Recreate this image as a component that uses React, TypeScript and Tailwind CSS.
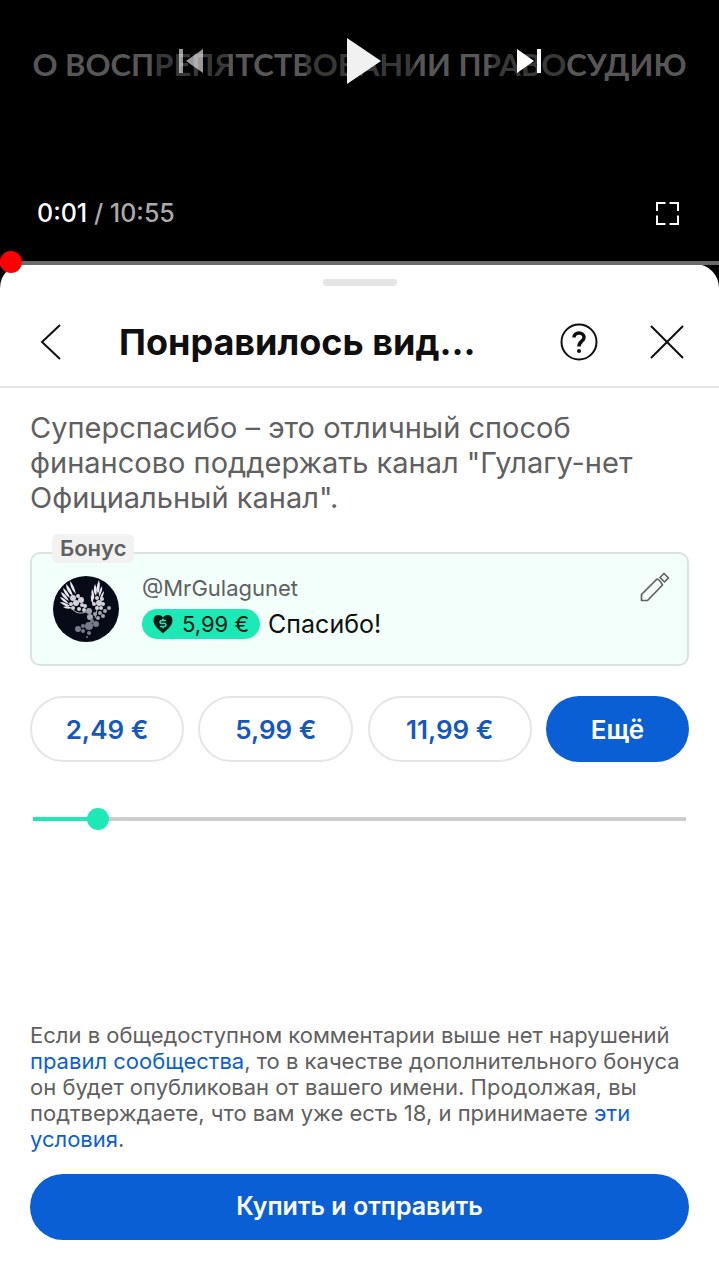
import { useState } from "react"

const prices = [
    { label: "2,49 €", value: 2.49, width: "w-[154px]" },
    { label: "5,99 €", value: 5.99, width: "w-[155px]" },
    { label: "11,99 €", value: 11.99, width: "w-[164px]" },
]

const MAX_PRICE = 70

function DoveAvatar() {
    return (
        <svg viewBox="0 0 66 66" className="size-[66px] shrink-0" role="img" aria-label="MrGulagunet">
            <circle cx="33" cy="33" r="33" fill="#070b18" />
            {/* Feathers */}
            <g fill="#e8e9ec">
                <path d="M17 5Q21 9 23 18Q17 13 17 5ZM13 8Q18 12 20 20Q13 16 13 8ZM10 12Q15 15 17 22Q11 19 10 12ZM8 16Q13 18 16 25Q9 22 8 16ZM7 21Q12 22 16 28Q9 26 7 21ZM7 26Q12 26 17 30Q11 31 7 26ZM10 31Q15 29 19 32Q14 34 10 31Z" />
                <path d="M46 4Q48 11 45 18Q42 12 46 4ZM42 8Q45 14 43 20Q39 15 42 8ZM39 13Q42 18 41 24Q37 20 39 13ZM49 10Q50 15 46 21Q45 16 49 10ZM51 15Q51 20 47 24Q47 19 51 15ZM38 19Q41 23 40 28Q37 24 38 19Z" />
            </g>
            {/* Flowers of the wings */}
            <g fill="#d2d3d7">
                <circle cx="20" cy="22" r="3" />
                <circle cx="25" cy="20" r="2" />
                <circle cx="18" cy="28" r="2" />
                <circle cx="23" cy="27" r="3" />
                <circle cx="28" cy="24" r="3" />
                <circle cx="29" cy="29" r="2" />
                <circle cx="20" cy="32" r="2" />
                <circle cx="26" cy="33" r="2" />
                <circle cx="32" cy="30" r="2" />
                <circle cx="31" cy="34" r="2" />
                <circle cx="44" cy="22" r="2" />
                <circle cx="49" cy="23" r="2" />
                <circle cx="46" cy="27" r="3" />
                <circle cx="41" cy="28" r="2" />
                <circle cx="50" cy="28" r="2" />
                <circle cx="44" cy="32" r="2" />
                <circle cx="48" cy="32" r="2" />
            </g>
            <path d="M20 34Q26 39 33 36M35 32L38 40M44 34L42 42" fill="none" stroke="#b5b7be" strokeWidth="1" />
            {/* Body and tail */}
            <g fill="#a1a4ae">
                <circle cx="36" cy="35" r="3" />
                <circle cx="37" cy="41" r="3" />
                <circle cx="42" cy="38" r="2" />
                <circle cx="47" cy="37" r="2" />
                <circle cx="52" cy="35" r="2" />
                <circle cx="56" cy="32" r="2" />
                <circle cx="50" cy="40" r="2" />
                <circle cx="45" cy="42" r="2" />
            </g>
            <g fill="#777b89">
                <circle cx="43" cy="48" r="3" />
                <circle cx="39" cy="45" r="2" />
                <circle cx="36" cy="50" r="4" />
                <circle cx="30" cy="50" r="2" />
                <circle cx="25" cy="53" r="3" />
                <circle cx="30" cy="55" r="2" />
                <circle cx="36" cy="57" r="2" />
                <circle cx="34" cy="61" r="1" />
            </g>
        </svg>
    )
}

function HeartIcon() {
    return (
        <svg viewBox="0 0 20 20" className="size-5" aria-hidden="true">
            <path d="M10 19.500C7 16.500 0.500 12 0.500 6.500C0.500 3 2.500 1 5.500 1C7.500 1 9 2 10 3.500C11 2 12.500 1 14.500 1C17.500 1 19.500 3 19.500 6.500C19.500 12 13 16.500 10 19.500Z" fill="#031a13" />
            <path d="M13 6.500H8.500Q7 6.500 7 8T8.500 9.500H11.500Q13 9.500 13 11T11.500 12.500H7M10 4.500V6.500M10 12.500V14.500" fill="none" stroke="#1de9b6" strokeWidth="1.500" />
        </svg>
    )
}

function PencilIcon() {
    return (
        <svg viewBox="0 0 30 30" className="size-[30px]" fill="none" stroke="#5c6362" strokeWidth="1.700" strokeLinejoin="round" aria-hidden="true">
            <path d="M1.500 28.500V22.500L17 7Q19.500 7.500 22.500 13L7.500 28.500ZM20 5.500L24 1.500L28.500 6L24.500 10Z" />
        </svg>
    )
}

export default function App() {
    const [price, setPrice] = useState(5.99)
    const percent = (price / MAX_PRICE) * 100

    return (
        <div className="flex min-h-screen flex-col bg-black font-['Inter',sans-serif]">
            {/* Video player */}
            <section className="relative flex h-[264px] flex-col">
                <p className="mt-[44px] whitespace-nowrap text-center font-['Lato',sans-serif] text-[31px] leading-10 font-bold text-[#575757]">
                    О ВОСПРЕПЯТСТВОВАНИИ ПРАВОСУДИЮ
                </p>
                <div className="absolute inset-x-0 top-[6px] flex items-center justify-center gap-[76px]">
                    <button type="button" aria-label="Предыдущее" className="flex size-[76px] items-center justify-center rounded-full bg-black/35 text-white/60">
                        <svg viewBox="0 0 24 24" className="size-6" fill="currentColor"><path d="M0 0h4v24H0zM24 0v24L7 12z" /></svg>
                    </button>
                    <button type="button" aria-label="Смотреть" className="flex size-[110px] items-center justify-center rounded-full bg-black/35 pl-[9px] text-[#f1f1f1]">
                        <svg viewBox="0 0 34 46" className="h-[46px] w-[34px]" fill="currentColor"><path d="M0 0L34 23L0 46Z" /></svg>
                    </button>
                    <button type="button" aria-label="Следующее" className="flex size-[76px] items-center justify-center rounded-full bg-black/35 text-white">
                        <svg viewBox="0 0 24 24" className="size-6" fill="currentColor"><path d="M20 0h4v24h-4zM0 0v24l17-12z" /></svg>
                    </button>
                </div>
                <div className="mt-auto mb-9 flex items-center justify-between pr-10 pl-[37px]">
                    <div className="text-[25px] leading-[30px] font-medium text-[#aaa]">
                        <span className="text-white">0:01</span> / 10:55
                    </div>
                    <button type="button" aria-label="Во весь экран">
                        <svg viewBox="0 0 23 23" className="size-[23px]" fill="none" stroke="#fff" strokeWidth="2">
                            <path d="M1 9V1H9.500M13.500 1H22V9M22 13.500V22H13.500M9.500 22H1V13.500" />
                        </svg>
                    </button>
                </div>
                <input
                    type="range"
                    aria-label="Позиция видео"
                    min={0}
                    max={655}
                    defaultValue={0}
                    className="absolute inset-x-0 -bottom-[9px] z-10 h-[22px] w-full appearance-none bg-[linear-gradient(#6b6b6b,#6b6b6b)] bg-[length:100%_4px] bg-[position:0_10px] bg-no-repeat [&::-webkit-slider-thumb]:size-[22px] [&::-webkit-slider-thumb]:appearance-none [&::-webkit-slider-thumb]:rounded-full [&::-webkit-slider-thumb]:bg-[#ff0000]"
                />
            </section>

            {/* Bottom sheet */}
            <main className="flex grow flex-col rounded-t-[24px] bg-white">
                <div className="mx-auto mt-[15px] h-[7px] w-[74px] rounded-full bg-[#e5e5e5]" />
                <header className="flex h-[102px] items-center border-b-2 border-[#e5e5e5] pt-3 pr-[35px] pl-10">
                    <button type="button" aria-label="Назад">
                        <svg viewBox="0 0 21 36" className="h-9 w-[21px]" fill="none" stroke="#0f0f0f" strokeWidth="2"><path d="M20 1L2 18L20 35" /></svg>
                    </button>
                    <h1 className="ml-[58px] grow text-4xl leading-11 font-bold whitespace-nowrap text-[#0f0f0f]">Понравилось вид...</h1>
                    <button type="button" aria-label="Справка">
                        <svg viewBox="0 0 38 38" className="size-[38px]" fill="none" stroke="#0f0f0f">
                            <circle cx="19" cy="19" r="17.500" strokeWidth="2" />
                            <path d="M14 14.500C14 8.500 24 8.500 24 14.500C24 18.500 19 18 19 23.500" strokeWidth="3.500" />
                            <circle cx="19" cy="28" r="2" fill="#0f0f0f" stroke="none" />
                        </svg>
                    </button>
                    <button type="button" aria-label="Закрыть" className="ml-[52px]">
                        <svg viewBox="0 0 34 34" className="size-[34px]" fill="none" stroke="#0f0f0f" strokeWidth="2"><path d="M1 1L33 33M33 1L1 33" /></svg>
                    </button>
                </header>

                <div className="flex grow flex-col px-[30px] pt-[22px] pb-10">
                    <p className="text-[29px] leading-[35px] text-[#606060]">
                        Суперспасибо – это отличный способ финансово поддержать канал "Гулагу-нет Официальный канал".
                    </p>

                    {/* Comment preview */}
                    <section className="relative mt-[37px] flex h-[114px] items-start rounded-[10px] border-2 border-[#d9e3e0] bg-[#f3fffb] px-[21px] pt-[22px]">
                        <span className="absolute -top-5 left-5 rounded-md bg-[#f2f2f2] px-2 text-[22px] leading-[29px] font-semibold text-[#606060]">Бонус</span>
                        <DoveAvatar />
                        <div className="ml-[23px] grow">
                            <div className="text-[22px] leading-6 text-[#606060]">@MrGulagunet</div>
                            <div className="mt-[9px] flex items-center gap-2">
                                <span className="flex h-[30px] items-center gap-[9px] rounded-full bg-[#1de9b6] px-[11px] text-[22px] text-[#031a13]">
                                    <HeartIcon />
                                    5,99 €
                                </span>
                                <span className="text-[25px] leading-[30px] text-[#0f0f0f]">Спасибо!</span>
                            </div>
                        </div>
                        <button type="button" aria-label="Изменить" className="-mt-1 -mr-1">
                            <PencilIcon />
                        </button>
                    </section>

                    {/* Amounts */}
                    <div className="mt-[30px] flex justify-between text-[26px] font-semibold">
                        {prices.map((item) => (
                            <button
                                key={item.label}
                                type="button"
                                onClick={() => setPrice(item.value)}
                                className={`h-[66px] rounded-full border-2 border-[#e5e5e5] text-[#1558bc] ${item.width}`}
                            >
                                {item.label}
                            </button>
                        ))}
                        <button type="button" className="h-[66px] w-[143px] rounded-full bg-[#0a5fd5] text-white">Ещё</button>
                    </div>
                    <input
                        type="range"
                        aria-label="Сумма"
                        min={0}
                        max={MAX_PRICE}
                        step={0.01}
                        value={price}
                        onChange={(e) => setPrice(Number(e.target.value))}
                        style={{ backgroundImage: `linear-gradient(to right, #1de9b6 ${percent}%, #cccccc ${percent}%)` }}
                        className="mx-[3px] mt-[46px] h-[22px] appearance-none bg-[length:100%_4px] bg-center bg-no-repeat [&::-webkit-slider-thumb]:size-[22px] [&::-webkit-slider-thumb]:appearance-none [&::-webkit-slider-thumb]:rounded-full [&::-webkit-slider-thumb]:bg-[#1de9b6]"
                    />

                    {/* Terms and purchase */}
                    <p className="mt-auto text-[22px] leading-[26px] text-[#606060]">
                        Если в общедоступном комментарии выше нет нарушений{" "}
                        <a href="#rules" className="text-[#0a5fd5]">правил сообщества</a>, то в качестве дополнительного бонуса он будет
                        опубликован от вашего имени. Продолжая, вы подтверждаете, что вам уже есть 18, и принимаете{" "}
                        <a href="#terms" className="text-[#0a5fd5]">эти условия</a>.
                    </p>
                    <button type="button" className="mt-[22px] h-[66px] w-full rounded-full bg-[#0a5fd5] text-[25px] font-semibold text-white">
                        Купить и отправить
                    </button>
                </div>
            </main>
        </div>
    )
}
